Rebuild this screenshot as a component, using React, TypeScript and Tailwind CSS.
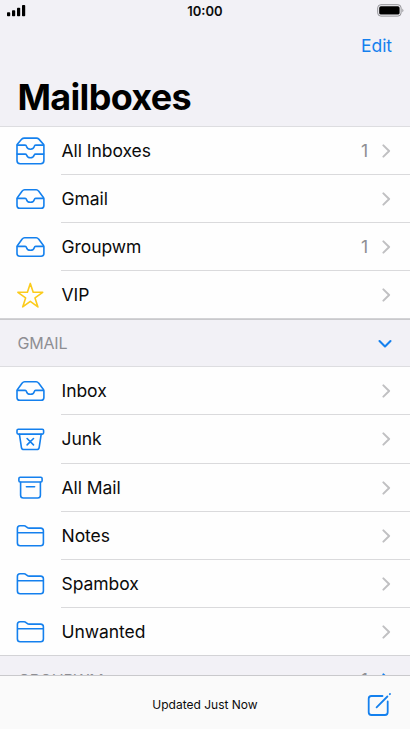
import React from "react";

type IconName = "inboxes" | "inbox" | "star" | "junk" | "archive" | "folder";

const blue = "#1480ee";

function Icon({ name }: { name: IconName }) {
  const common = {
    width: 30,
    height: 30,
    viewBox: "0 0 30 30",
    fill: "none",
    stroke: name === "star" ? "#fbcb1c" : blue,
    strokeWidth: 1.6,
    strokeLinecap: "round" as const,
    strokeLinejoin: "round" as const,
  };
  switch (name) {
    case "inboxes":
      return (
        <svg {...common}>
          <path d="M2.1 8.6 6.8 3.1Q7.8 2.1 9.2 2.1H21.5Q22.9 2.1 23.9 3.1L28.7 8.6Q28.9 9 28.9 9.6V24.6Q28.9 27.7 25.8 27.7H5.1Q2 27.7 2 24.6V9.6Q2 9 2.1 8.6Z" />
          <path d="M2.4 9.1H10.1Q11.2 9.1 11.4 10.2C11.8 12.1 13.3 13.2 15.4 13.2S19 12.1 19.4 10.2Q19.6 9.1 20.7 9.1H28.4" />
          <path d="M2.2 18.1H10.1Q11.2 18.1 11.6 19C12.1 20.6 13.5 21.8 15.4 21.8S18.7 20.6 19.2 19Q19.6 18.1 20.7 18.1H28.6" />
        </svg>
      );
    case "inbox":
      return (
        <svg {...common}>
          <path d="M2.5 13.4 7.2 7.1Q8.1 5.8 9.6 5.8H21.2Q22.7 5.8 23.6 7.1L28.4 13.4Q28.9 14.2 28.9 15V21.4Q28.9 24.2 26.1 24.2H4.8Q2 24.2 2 21.4V15Q2 14.2 2.5 13.4Z" />
          <path d="M2.4 14.4H10.1Q11.2 14.4 11.4 15.3C11.8 17.2 13.3 18.3 15.4 18.3S19 17.2 19.4 15.3Q19.6 14.4 20.7 14.4H28.4" />
        </svg>
      );
    case "star":
      return (
        <svg {...common}>
          <path d="M15.3 3.4 18.2 12.3H27.7L20 17.9 22.9 26.9 15.3 21.3 7.7 26.9 10.6 17.9 2.9 12.3H12.4Z" />
        </svg>
      );
    case "junk":
      return (
        <svg {...common}>
          <rect x="2" y="5.3" width="26.6" height="4.8" rx="1.3" />
          <path d="M4.4 10.2 6.4 23.3Q6.7 25.5 8.9 25.5H21.7Q23.9 25.5 24.2 23.3L26.2 10.2M12.1 14.5 18.5 20.9M18.5 14.5 12.1 20.9" />
        </svg>
      );
    case "archive":
      return (
        <svg {...common}>
          <rect x="3.9" y="4.3" width="23.2" height="4.7" rx="1.3" />
          <path d="M5.6 9.2V22.2Q5.6 25 8.4 25H22.6Q25.4 25 25.4 22.2V9.2M11.4 13.7H19.6" />
        </svg>
      );
    case "folder":
      return (
        <svg {...common}>
          <path d="M2.4 7.6Q2.4 4.8 5 4.8H9Q10.2 4.8 11.1 5.6L12.1 6.4Q13 7.1 14.2 7.1H25.6Q28.4 7.1 28.4 9.8V22Q28.4 24.8 25.6 24.8H5.2Q2.4 24.8 2.4 22ZM2.5 11.8H28.3" />
        </svg>
      );
  }
}

function Chevron({ color = "#c0c0c2" }: { color?: string }) {
  return (
    <svg width="9" height="14" viewBox="0 0 9 14" fill="none" stroke={color} strokeWidth="2" strokeLinecap="round" strokeLinejoin="round">
      <path d="M1.4 1.4 7.1 7 1.4 12.6" />
    </svg>
  );
}

function ChevronDown() {
  return (
    <svg width="14" height="9" viewBox="0 0 14 9" fill="none" stroke={blue} strokeWidth="2.1" strokeLinecap="round" strokeLinejoin="round">
      <path d="M1.5 2 7 7.5 12.5 2" />
    </svg>
  );
}

interface RowProps {
  icon: IconName;
  label: string;
  count?: number;
  tall?: boolean;
  last?: boolean;
}

function Row({ icon, label, count, tall, last }: RowProps) {
  return (
    <li className={`flex shrink-0 pl-[15px] ${tall ? "h-[49px]" : "h-12"} ${last ? "border-b border-[#d3d3d6]" : ""}`}>
      <span className={`flex w-[46px] shrink-0 items-center ${last ? "" : "pb-px"}`}>
        <Icon name={icon} />
      </span>
      <div className={`flex flex-1 items-center pr-[19px] ${last ? "" : "border-b border-[#dadadc]"}`}>
        <span className="flex-1 pl-[0.5px] text-[17.5px] leading-6 tracking-[-0.05px]">{label}</span>
        {count !== undefined && <span className="mr-[14px] text-[17.5px] leading-6 text-[#8e8e93]">{count}</span>}
        <Chevron />
      </div>
    </li>
  );
}

export default function App() {
  return (
    <div className="flex h-[729px] w-[410px] flex-col overflow-hidden bg-[#fefefe] font-['Inter','Liberation_Sans',sans-serif] text-[#0b0b0b]">
      <header className="h-[127px] shrink-0 border-b border-[#dddde0] bg-[#f2f1f6]">
        <div className="grid h-[22px] grid-cols-3 items-center pl-[7px] pr-[6px]">
          <svg className="-mt-px" width="19" height="12" viewBox="0 0 19 12" fill="#000">
            <rect x="0" y="7.3" width="3.2" height="4" rx=".8" />
            <rect x="5" y="5.2" width="3.2" height="6.1" rx=".8" />
            <rect x="10" y="2.8" width="3.2" height="8.5" rx=".8" />
            <rect x="15" y="0" width="3.2" height="11.3" rx=".8" />
          </svg>
          <span className="pr-px text-center text-[13px] leading-5 font-semibold">10:00</span>
          <svg className="-mt-px justify-self-end" width="27" height="13" viewBox="0 0 27 13">
            <rect x=".7" y=".7" width="23.4" height="11.4" rx="3.2" fill="none" stroke="#929296" />
            <rect x="2.2" y="2.2" width="20.4" height="8.4" rx="1.7" fill="#000" />
            <path d="M25.4 4.5Q27.4 6.4 25.4 8.3Z" fill="#929296" />
          </svg>
        </div>
        <div className="flex h-12 items-center justify-end pr-[18px] text-[17.5px] leading-6 tracking-[-0.05px] text-[#1480ee]">Edit</div>
        <h1 className="pl-[17.5px] text-[36px] leading-[54px] font-bold tracking-[-0.7px] text-black">Mailboxes</h1>
      </header>
      <main className="flex min-h-0 flex-1 flex-col overflow-hidden">
        <ul className="flex shrink-0 flex-col">
          <Row icon="inboxes" label="All Inboxes" count={1} />
          <Row icon="inbox" label="Gmail" />
          <Row icon="inbox" label="Groupwm" count={1} />
          <Row icon="star" label="VIP" last />
        </ul>
        <div className="flex h-12 shrink-0 items-center border-y border-t-[#c9c9cc] border-b-[#dddde0] bg-[#f2f1f6] pr-[18px] pl-[17.5px]">
          <span className="flex-1 text-[16px] tracking-[-0.2px] text-[#8e8e93]">GMAIL</span>
          <ChevronDown />
        </div>
        <ul className="flex shrink-0 flex-col">
          <Row icon="inbox" label="Inbox" />
          <Row icon="junk" label="Junk" tall />
          <Row icon="archive" label="All Mail" />
          <Row icon="folder" label="Notes" />
          <Row icon="folder" label="Spambox" />
          <Row icon="folder" label="Unwanted" last />
        </ul>
        <div className="flex h-12 shrink-0 items-center bg-[#f2f1f6] pr-[19px] pb-px pl-[18px]">
          <span className="flex-1 text-[16px] tracking-[-0.2px] text-[#8e8e93]">GROUPWM</span>
          <span className="mr-[14px] pt-[2px] text-[17px] text-[#8e8e93]">1</span>
          <Chevron color={blue} />
        </div>
      </main>
      <footer className="grid h-[54px] shrink-0 grid-cols-[48px_1fr_48px] items-center border-t border-[#c9c9cc] bg-[#fafafa]">
        <span />
        <span className="pt-[4px] text-center text-[12px]">Updated Just Now</span>
        <svg className="mt-[4px] ml-[4px]" width="26" height="26" viewBox="0 0 26 26" fill="none" stroke={blue} strokeWidth="1.8" strokeLinecap="round" strokeLinejoin="round">
          <path d="M16.5 4H5.4Q2.7 4 2.7 6.7V20.3Q2.7 23 5.4 23H19Q21.7 23 21.7 20.3V9.5" />
          <path d="M10.6 15.3 21.4 4.5M23.8 2.2 24 2" />
        </svg>
      </footer>
    </div>
  );
}
